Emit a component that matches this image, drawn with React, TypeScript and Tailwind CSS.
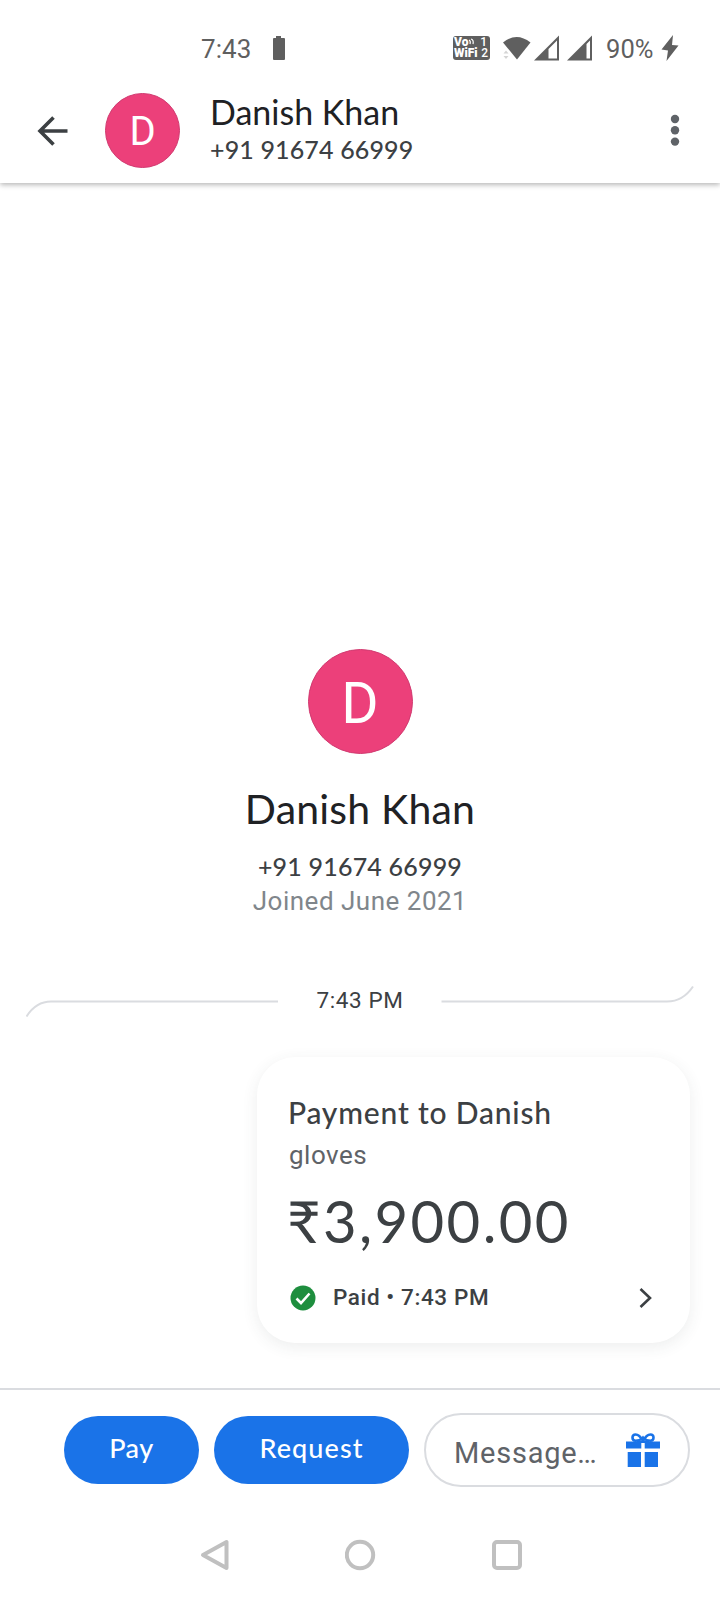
import type { ReactNode } from "react";
import clsx from "clsx";

const contact = {
  name: "Danish Khan",
  initial: "D",
  phone: "+91 91674 66999",
  joined: "Joined June 2021",
};

const payment = {
  title: "Payment to Danish",
  note: "gloves",
  amount: "₹3,900.00",
  status: "Paid • 7:43 PM",
};

function Avatar({ className }: { className: string }) {
  return (
    <div
      className={clsx(
        "flex shrink-0 items-center justify-center rounded-full border border-[#d13a70] bg-[#ec407a] text-white",
        className
      )}
    >
      {contact.initial}
    </div>
  );
}

function StatusBar() {
  return (
    <div className="relative z-10 flex h-20 items-center bg-white pt-4 text-[#5f5f5f]">
      <span className="ml-[201px] w-[71px] pt-px text-[26px] leading-8 tracking-[0.1px]">7:43</span>
      <svg width="14" height="24" viewBox="0 0 14 24" fill="currentColor">
        <path d="M4 0h5v2h3a1 1 0 0 1 1 1v20a1 1 0 0 1-1 1H2a1 1 0 0 1-1-1V3a1 1 0 0 1 1-1h2z" />
      </svg>
      <div className="ml-[167px] flex h-6 w-[37px] flex-col justify-center rounded-[3px] bg-[#5f5f5f] pl-px text-[12px] leading-[11px] font-black text-white">
        <div className="flex justify-between">
          <span className="flex">
            Vo
            <svg width="8" height="8" viewBox="0 0 8 8" fill="none" stroke="white" strokeWidth="1.2">
              <path d="M1 3q2 1 1 4M3 2q3 1 2 5" />
            </svg>
          </span>
          <span className="pr-[3px] font-medium">1</span>
        </div>
        <div className="flex justify-between">
          <span>WiFi</span>
          <span className="pr-[2px] font-medium">2</span>
        </div>
      </div>
      <svg className="ml-3" width="30" height="24" viewBox="0 0 30 24" fill="currentColor">
        <path d="M1 6.5Q14.500-4.500 28.500 6.500L15 23.500z" />
        <path d="M1.500 17.500L4 14.500L6.500 17.500zM1.500 20L4 23L6.500 20z" fill="#d4d4d4" />
      </svg>
      <svg className="ml-[2px]" width="26" height="26" viewBox="0 0 26 26" fill="currentColor">
        <path fillRule="evenodd" d="M25 0.500V25.500H0zM23 5.500L14.500 14V23.500H23z" />
      </svg>
      <svg className="ml-[7px]" width="26" height="26" viewBox="0 0 26 26" fill="currentColor">
        <path fillRule="evenodd" d="M25 0.500V25.500H0zM23 5.500L19.500 9V23.500H23z" />
      </svg>
      <span className="ml-[13px] w-[55px] pt-px text-[25.500px] leading-8 tracking-[0.1px]">90%</span>
      <svg width="18" height="26" viewBox="0 0 18 26" fill="currentColor">
        <path d="M12 0L0.500 14.500L7 15.500L5.500 26L17.500 10.500L11 10z" />
      </svg>
    </div>
  );
}

function Header() {
  return (
    <header className="flex h-[103px] items-start bg-white shadow-[0_2px_5px_rgba(0,0,0,0.28)]">
      <svg
        className="mt-9 ml-9"
        width="32"
        height="30"
        viewBox="0 0 32 30"
        fill="none"
        stroke="#3c4043"
        strokeWidth="3.6"
      >
        <path d="M31.500 15H4M17.500 1.500L4 15L17.500 28.500" />
      </svg>
      <Avatar className="mt-[13px] ml-[37px] size-[75px] pt-0.5 text-[40px]" />
      <div className="mt-3 ml-[30px] flex flex-col whitespace-nowrap font-['Lato']">
        <h1 className="h-[41px] text-[34px] leading-10 text-[#202124]">{contact.name}</h1>
        <p className="text-[25px] leading-8 font-medium tracking-[0.15px] text-[#3c4043]">{contact.phone}</p>
      </div>
      <svg className="mt-[34px] mr-10 ml-auto" width="10" height="32" viewBox="0 0 10 32" fill="#5f6368">
        <circle cx="5" cy="5" r="4.200" />
        <circle cx="5" cy="16.300" r="4.200" />
        <circle cx="5" cy="27.600" r="4.200" />
      </svg>
    </header>
  );
}

function Divider({ children }: { children: ReactNode }) {
  return (
    <div className="mt-[68px] flex h-8 items-center justify-between px-[26px]">
      <svg width="253" height="32" viewBox="0 0 253 32" fill="none" stroke="#dadce0" strokeWidth="2">
        <path d="M0.500 31.500Q10 16.500 25 16.500H252" />
      </svg>
      <span className="text-[22.500px] tracking-[0.600px] text-[#3c4043]">{children}</span>
      <svg width="253" height="32" viewBox="0 0 253 32" fill="none" stroke="#dadce0" strokeWidth="2">
        <path d="M0.500 16.500H226Q242 16.500 252 1.500" />
      </svg>
    </div>
  );
}

function PaymentCard() {
  return (
    <div className="mt-[40px] mr-[30px] flex h-[286px] w-[433px] flex-col self-end rounded-[38px] bg-white px-8 pt-[35px] whitespace-nowrap text-[#3c4043] shadow-[0_4px_16px_rgba(60,64,67,0.09)]">
      <h3 className="-ml-px h-10 font-['Lato'] text-[30px] leading-10 font-medium tracking-[0.8px]">
        {payment.title}
      </h3>
      <p className="mt-[5px] h-9 text-[26px] leading-9 tracking-[0.500px] text-[#5f6368]">{payment.note}</p>
      <p className="mt-4 -ml-[2px] h-16 font-['Lato'] text-[58px] leading-[64px] tracking-[2.4px]">
        {payment.amount}
      </p>
      <div className="mt-[29px] flex h-8 items-center">
        <svg className="ml-px" width="26" height="26" viewBox="0 0 26 26" fill="none">
          <circle cx="13" cy="13" r="12.500" fill="#1e8e3e" />
          <path d="M6.500 13.500L11 18L19.500 8.500" stroke="white" strokeWidth="2.600" />
        </svg>
        <span className="ml-[17px] text-[22.500px] font-medium tracking-[0.600px]">{payment.status}</span>
        <svg
          className="mr-[5px] ml-auto"
          width="14"
          height="20"
          viewBox="0 0 14 20"
          fill="none"
          stroke="#3c4043"
          strokeWidth="2.600"
        >
          <path d="M1.500 1L11 10L1.500 19" />
        </svg>
      </div>
    </div>
  );
}

function GiftIcon() {
  return (
    <svg width="34" height="35" viewBox="0 0 34 35" fill="#1a73e8">
      <path d="M0 8.500H15.300V15.500H0zM18.700 8.500H34V15.500H18.700zM1.700 19H15V34H1.700zM18.700 19H32V34H18.700z" />
      <path d="M11 7.500H23V10H11z" />
      <path
        d="M17 8Q13.500 1.500 9.500 1.500C5.500 1.500 5.500 7.500 9.500 7.800Q14 7.800 17 4.500Q20 7.800 24.500 7.800C28.500 7.500 28.500 1.500 24.500 1.500Q20.500 1.500 17 8"
        fill="none"
        stroke="#1a73e8"
        strokeWidth="2.600"
      />
    </svg>
  );
}

function ActionBar() {
  return (
    <div className="mt-[45px] flex h-[122px] items-start border-t-2 border-[#dadce0] pt-[22px] pl-16">
      <button className="mt-1 h-[68px] w-[135px] rounded-full bg-[#1a73e8] pb-1 font-['Lato'] text-[27px] font-medium tracking-[0.500px] text-white">
        Pay
      </button>
      <button className="mt-1 ml-[15px] h-[68px] w-[195px] rounded-full bg-[#1a73e8] pb-1 font-['Lato'] text-[27px] font-medium tracking-[1.1px] text-white">
        Request
      </button>
      <div className="mt-px ml-[15px] flex h-[74px] w-[266px] items-center justify-between rounded-full border-2 border-[#dadce0] pr-7 pl-7">
        <span className="pt-2 text-[29px] tracking-[0.75px] text-[#5f6368]">Message…</span>
        <GiftIcon />
      </div>
    </div>
  );
}

function NavBar() {
  return (
    <nav className="flex h-[90px] items-center justify-between pr-[197px] pl-[199px]">
      <svg width="32" height="32" viewBox="0 0 32 32" fill="none" stroke="#c0c0c0" strokeWidth="4" strokeLinejoin="round">
        <path d="M27.500 3V29L4 16z" />
      </svg>
      <svg width="32" height="32" viewBox="0 0 32 32" fill="none" stroke="#c0c0c0" strokeWidth="4">
        <circle cx="15" cy="16" r="13.200" />
      </svg>
      <svg width="32" height="32" viewBox="0 0 32 32" fill="none" stroke="#c0c0c0" strokeWidth="4">
        <rect x="3" y="3" width="26" height="26" rx="3" />
      </svg>
    </nav>
  );
}

export default function App() {
  return (
    <div className="flex h-[1600px] w-[720px] flex-col overflow-hidden bg-white font-['Roboto',sans-serif]">
      <StatusBar />
      <Header />
      <main className="flex flex-col pt-[466px]">
        <section className="flex flex-col items-center whitespace-nowrap">
          <Avatar className="size-[105px] pt-1 text-[57px]" />
          <h2 className="mt-[31px] h-12 font-['Lato'] text-[41px] leading-[48px] tracking-[0.2px] text-[#202124]">
            {contact.name}
          </h2>
          <p className="mt-[17px] h-8 font-['Lato'] text-[25px] leading-8 font-medium tracking-[0.2px] text-[#3c4043]">
            {contact.phone}
          </p>
          <p className="mt-[3px] h-8 text-[26px] leading-8 tracking-[0.500px] text-[#80868b]">{contact.joined}</p>
        </section>
        <Divider>7:43 PM</Divider>
        <PaymentCard />
      </main>
      <ActionBar />
      <NavBar />
    </div>
  );
}
